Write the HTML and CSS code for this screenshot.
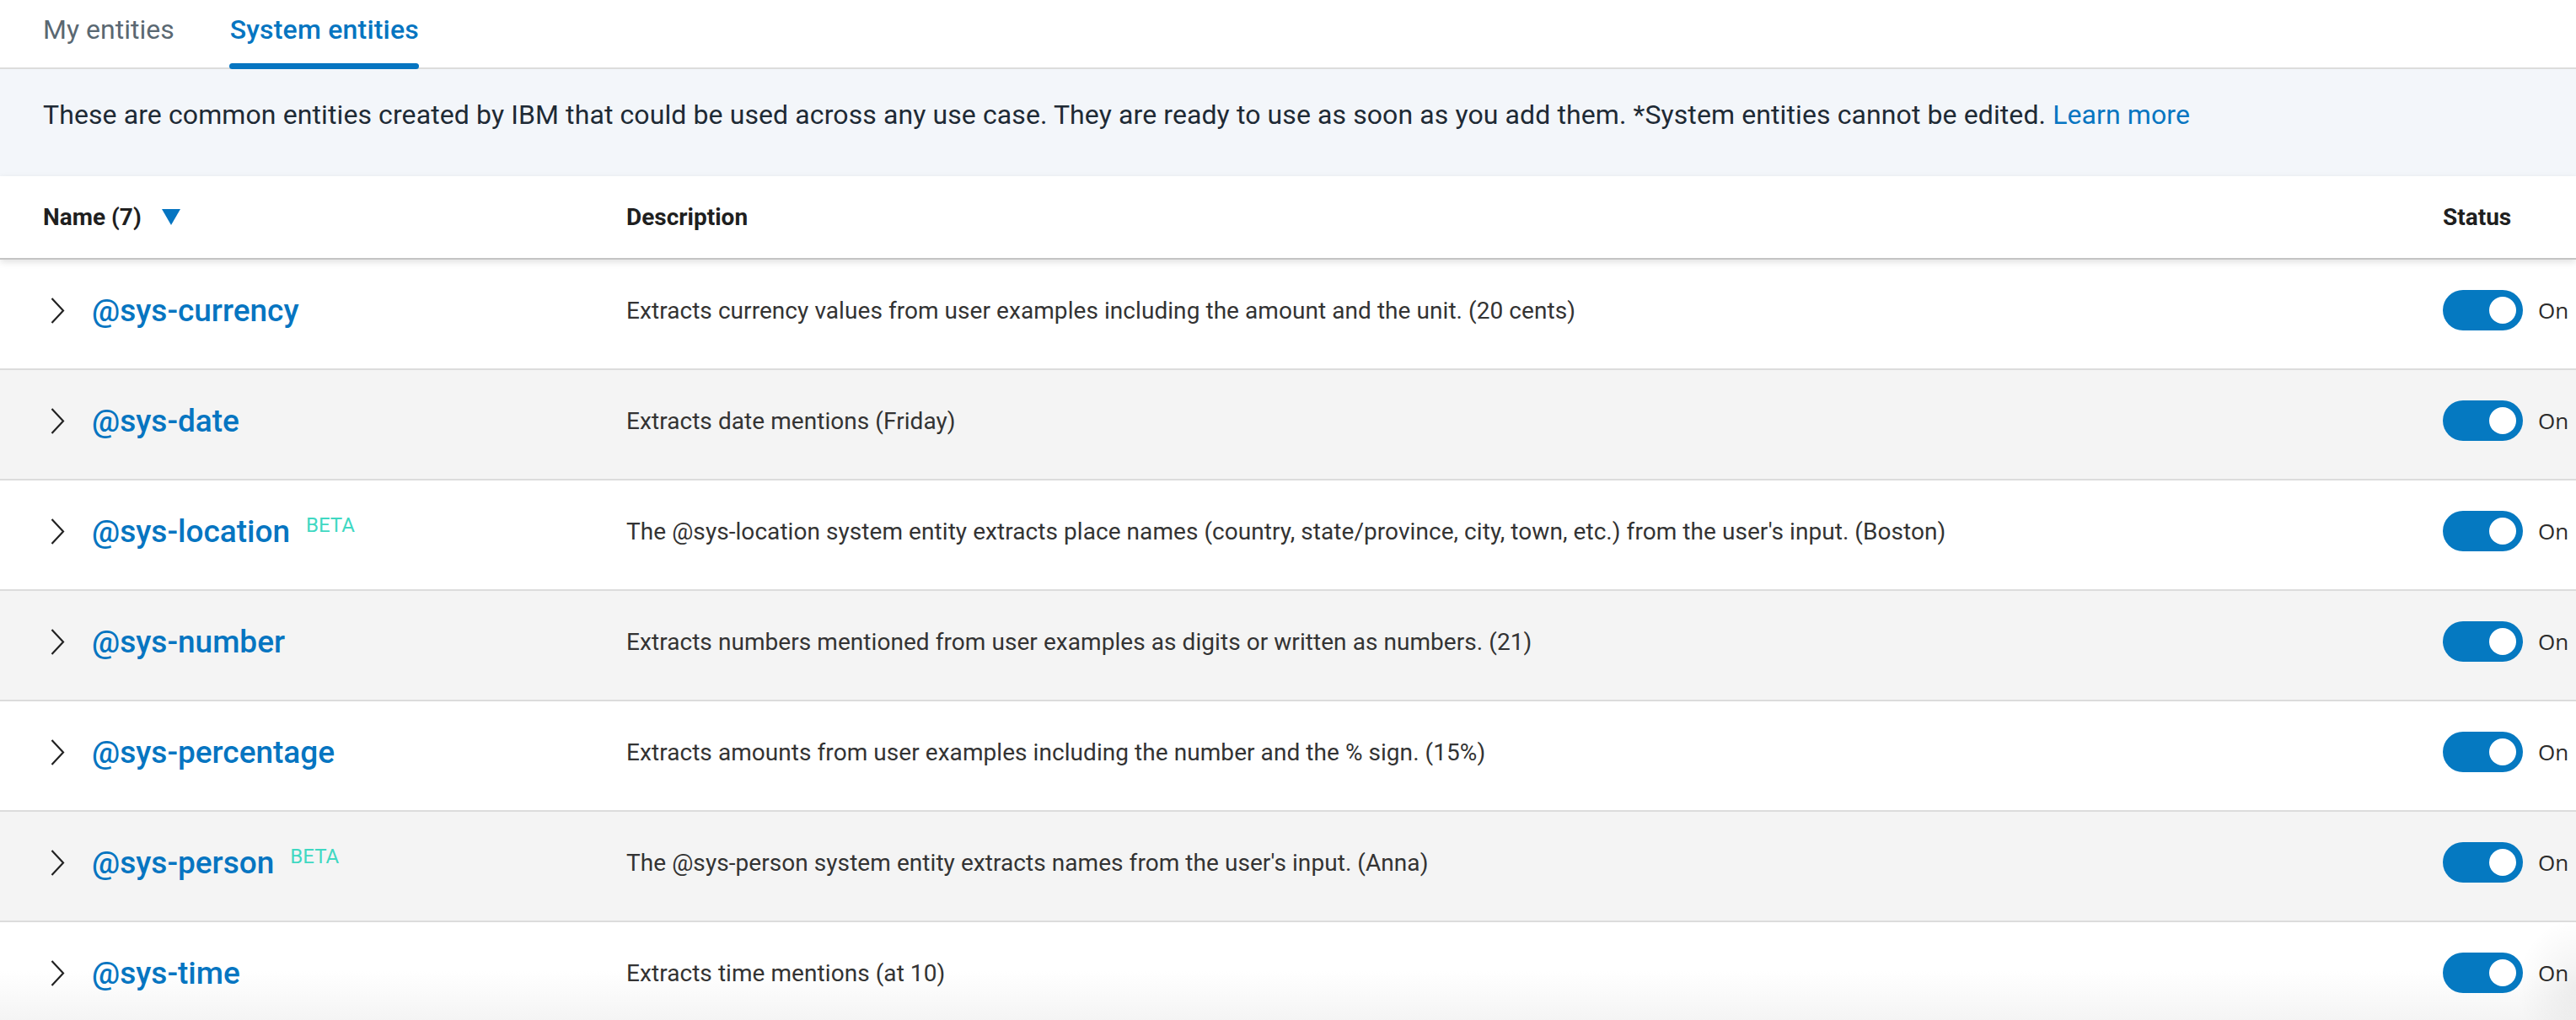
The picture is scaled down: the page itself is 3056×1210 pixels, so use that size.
FILE: index.html
```html
<!DOCTYPE html>
<html lang="en">
<head>
<meta charset="utf-8">
<title>System entities</title>
<link rel="stylesheet" href="styles.css">
</head>
<body>
<nav class="tabs">
  <a class="tab">My entities</a>
  <a class="tab active">System entities</a>
</nav>
<div class="banner">
  <p>These are common entities created by IBM that could be used across any use case. They are ready to use as soon as you add them. *System entities cannot be edited. <a class="link">Learn more</a></p>
</div>
<div class="table">
  <div class="row head">
    <div class="cell name-head">Name (7) <svg class="sort" viewBox="0 0 22 19"><path d="M0 0 H22 L11 19 Z"/></svg></div>
    <div class="cell">Description</div>
    <div class="cell">Status</div>
  </div>

  <div class="row">
    <div class="cell name"><svg class="chev" viewBox="0 0 17 31"><path d="M1.5 1 L15 15.5 L1.5 30"/></svg><span class="label"><span class="ent">@sys-currency</span></span></div>
    <div class="cell desc">Extracts currency values from user examples including the amount and the unit. (20 cents)</div>
    <div class="cell status"><span class="toggle"><span class="knob"></span></span><span class="on">On</span></div>
  </div>

  <div class="row alt">
    <div class="cell name"><svg class="chev" viewBox="0 0 17 31"><path d="M1.5 1 L15 15.5 L1.5 30"/></svg><span class="label"><span class="ent">@sys-date</span></span></div>
    <div class="cell desc">Extracts date mentions (Friday)</div>
    <div class="cell status"><span class="toggle"><span class="knob"></span></span><span class="on">On</span></div>
  </div>

  <div class="row">
    <div class="cell name"><svg class="chev" viewBox="0 0 17 31"><path d="M1.5 1 L15 15.5 L1.5 30"/></svg><span class="label"><span class="ent">@sys-location</span><span class="beta">BETA</span></span></div>
    <div class="cell desc">The @sys-location system entity extracts place names (country, state/province, city, town, etc.) from the user's input. (Boston)</div>
    <div class="cell status"><span class="toggle"><span class="knob"></span></span><span class="on">On</span></div>
  </div>

  <div class="row alt">
    <div class="cell name"><svg class="chev" viewBox="0 0 17 31"><path d="M1.5 1 L15 15.5 L1.5 30"/></svg><span class="label"><span class="ent">@sys-number</span></span></div>
    <div class="cell desc">Extracts numbers mentioned from user examples as digits or written as numbers. (21)</div>
    <div class="cell status"><span class="toggle"><span class="knob"></span></span><span class="on">On</span></div>
  </div>

  <div class="row">
    <div class="cell name"><svg class="chev" viewBox="0 0 17 31"><path d="M1.5 1 L15 15.5 L1.5 30"/></svg><span class="label"><span class="ent">@sys-percentage</span></span></div>
    <div class="cell desc">Extracts amounts from user examples including the number and the % sign. (15%)</div>
    <div class="cell status"><span class="toggle"><span class="knob"></span></span><span class="on">On</span></div>
  </div>

  <div class="row alt">
    <div class="cell name"><svg class="chev" viewBox="0 0 17 31"><path d="M1.5 1 L15 15.5 L1.5 30"/></svg><span class="label"><span class="ent">@sys-person</span><span class="beta">BETA</span></span></div>
    <div class="cell desc">The @sys-person system entity extracts names from the user's input. (Anna)</div>
    <div class="cell status"><span class="toggle"><span class="knob"></span></span><span class="on">On</span></div>
  </div>

  <div class="row last">
    <div class="cell name"><svg class="chev" viewBox="0 0 17 31"><path d="M1.5 1 L15 15.5 L1.5 30"/></svg><span class="label"><span class="ent">@sys-time</span></span></div>
    <div class="cell desc">Extracts time mentions (at 10)</div>
    <div class="cell status"><span class="toggle"><span class="knob"></span></span><span class="on">On</span></div>
  </div>
</div>
<div class="fab-shadow"></div>
</body>
</html>
```

FILE: styles.css
```css
* { box-sizing: border-box; }
html, body { margin: 0; padding: 0; }
body {
  width: 3056px;
  height: 1210px;
  overflow: hidden;
  background: #ffffff;
  font-family: Roboto, "Liberation Sans", sans-serif;
  color: #152935;
  position: relative;
}

.tabs {
  display: flex;
  height: 82px;
  padding-left: 51px;
  gap: 66px;
  border-bottom: 2px solid #dcdcdc;
}
.tab {
  position: relative;
  font-size: 32px;
  line-height: 40px;
  padding-top: 15px;
  color: #5a6872;
}
.tab.active {
  color: #0675c1;
  font-weight: 500;
  letter-spacing: 0.2px;
}
.tab.active::after {
  content: "";
  position: absolute;
  left: -1px;
  right: 0;
  bottom: -2px;
  height: 7px;
  border-radius: 4px;
  background: #0675c1;
}

.banner {
  height: 127px;
  background: #f3f6fa;
  padding: 34px 51px 0;
}
.banner p {
  margin: 0;
  font-size: 32px;
  line-height: 40px;
  letter-spacing: 0.1px;
  color: #1e2a35;
}
.link { color: #0675c1; }

.row {
  display: grid;
  grid-template-columns: 743px 1fr 158px;
  height: 131px;
  padding-bottom: 9px;
  border-bottom: 2px solid #dcdcdc;
  background: #ffffff;
}
.row.alt { background: #f4f4f4; }
.row.last {
  background: linear-gradient(#ffffff 0%, #ffffff 45%, #f2f2f2 100%);
}
.row.head {
  position: relative;
  z-index: 1;
  height: 99px;
  padding-bottom: 0;
  border-bottom: 2px solid #c4c4c4;
  box-shadow: 0 3px 8px rgba(0, 0, 0, 0.12);
}

.cell {
  display: flex;
  align-items: center;
}
.head .cell {
  font-size: 28px;
  font-weight: 700;
  color: #1f1f1f;
}
.name-head { padding-left: 51px; }
.sort {
  width: 22px;
  height: 19px;
  margin-left: 24px;
  fill: #0675c1;
}

.name { padding-left: 60px; }
.chev {
  width: 17px;
  height: 31px;
  fill: none;
  stroke: #222222;
  stroke-width: 2.2;
  margin-right: 32px;
}
.label { white-space: nowrap; }
.ent {
  font-size: 37px;
  font-weight: 500;
  color: #0675c1;
}
.beta {
  position: relative;
  top: -12px;
  margin-left: 19px;
  font-size: 24px;
  color: #3fd8c2;
}

.desc {
  font-size: 28px;
  letter-spacing: 0.06px;
  color: #333333;
}

.status { gap: 18px; }
.toggle {
  display: flex;
  justify-content: flex-end;
  align-items: center;
  width: 95px;
  height: 48px;
  padding-right: 8px;
  border-radius: 24px;
  background: #0579c1;
}
.knob {
  width: 32px;
  height: 32px;
  border-radius: 50%;
  background: #ffffff;
}
.on {
  font-family: "Open Sans", sans-serif;
  font-size: 26px;
  color: #2b2b2b;
}

.fab-shadow {
  position: absolute;
  right: -70px;
  bottom: -40px;
  width: 140px;
  height: 160px;
  border-radius: 50%;
  background: radial-gradient(closest-side, rgba(0,0,0,0.06), rgba(0,0,0,0));
}
```
